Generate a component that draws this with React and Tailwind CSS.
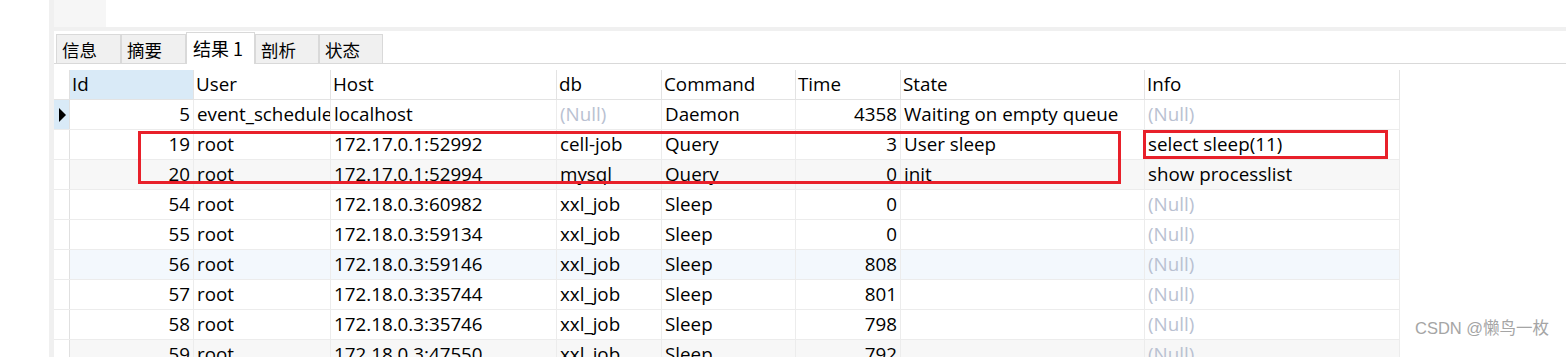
const cols = [
  { key: "id", label: "Id", w: "w-[124px]", right: true },
  { key: "user", label: "User", w: "w-[137px]" },
  { key: "host", label: "Host", w: "w-[226px]" },
  { key: "db", label: "db", w: "w-[105px]" },
  { key: "command", label: "Command", w: "w-[134px]" },
  { key: "time", label: "Time", w: "w-[105px]", right: true },
  { key: "state", label: "State", w: "w-[244px]" },
  { key: "info", label: "Info", w: "w-[255px]" },
]

const rows = [
  { id: 5, user: "event_scheduler", host: "localhost", db: null, command: "Daemon", time: 4358, state: "Waiting on empty queue", info: null, bg: "bg-white", current: true },
  { id: 19, user: "root", host: "172.17.0.1:52992", db: "cell-job", command: "Query", time: 3, state: "User sleep", info: "select sleep(11)", bg: "bg-white" },
  { id: 20, user: "root", host: "172.17.0.1:52994", db: "mysql", command: "Query", time: 0, state: "init", info: "show processlist", bg: "bg-[#f7f7f7]" },
  { id: 54, user: "root", host: "172.18.0.3:60982", db: "xxl_job", command: "Sleep", time: 0, state: "", info: null, bg: "bg-white" },
  { id: 55, user: "root", host: "172.18.0.3:59134", db: "xxl_job", command: "Sleep", time: 0, state: "", info: null, bg: "bg-white" },
  { id: 56, user: "root", host: "172.18.0.3:59146", db: "xxl_job", command: "Sleep", time: 808, state: "", info: null, bg: "bg-[#f3f8fd]" },
  { id: 57, user: "root", host: "172.18.0.3:35744", db: "xxl_job", command: "Sleep", time: 801, state: "", info: null, bg: "bg-white" },
  { id: 58, user: "root", host: "172.18.0.3:35746", db: "xxl_job", command: "Sleep", time: 798, state: "", info: null, bg: "bg-white" },
  { id: 59, user: "root", host: "172.18.0.3:47550", db: "xxl_job", command: "Sleep", time: 792, state: "", info: null, bg: "bg-[#f7f7f7]" },
]

const tabs = ["信息", "摘要", "结果 1", "剖析", "状态"]

function Cell({ col, value }) {
  const isNull = value === null
  return (
    <div
      className={`${col.w} shrink-0 h-full border-r border-[#ececec] overflow-hidden whitespace-nowrap flex items-center px-[3px] ${
        col.right ? "justify-end" : ""
      } ${isNull ? "text-[#b9c1d1]" : "text-black"}`}
    >
      {isNull ? "(Null)" : value}
    </div>
  )
}

export default function App() {
  return (
    <div className="relative w-[1566px] h-[357px] overflow-hidden bg-white flex font-['Open_Sans','Noto_Sans_CJK_SC',sans-serif] text-[18.8px]">
      <div className="w-[49px] shrink-0 bg-white" />
      <div className="w-[5px] shrink-0 bg-[#f0f0f0]" />
      <div className="flex-1 flex flex-col">
        {/* toolbar */}
        <div className="h-[27px] shrink-0 flex">
          <div className="w-[52px] bg-[#f6f6f6]" />
        </div>
        <div className="h-[4px] shrink-0 bg-[#f0f0f0]" />

        {/* tabs */}
        <div className="h-[33px] shrink-0 flex items-end pl-[2px] border-b border-[#d9d9d9] font-['Noto_Sans_CJK_SC',sans-serif]">
          {tabs.map((t, i) =>
            i === 2 ? (
              <div
                key={t}
                className="w-[69px] h-[32px] -mb-px bg-white border border-b-0 border-[#d9d9d9] flex items-center pl-[6px] text-[18px] text-black"
              >
                {t}
              </div>
            ) : (
              <div
                key={t}
                className={`${i === 3 || i === 4 ? "w-[64px]" : "w-[65px]"} h-[29px] bg-[#f0f0f0] border border-b-0 border-[#d9d9d9] flex items-center pl-[5px] pt-[2px] text-[17.5px] text-black`}
              >
                {t}
              </div>
            )
          )}
        </div>

        {/* grid */}
        <div className="pt-[6px] shrink-0">
          <div className="w-[1346px]">
            <div className="flex h-[30px] border-b border-[#e3e3e3]">
              <div className="w-[16px] shrink-0 border-r border-[#e0e0e0] bg-white" />
              {cols.map((c, i) => (
                <div
                  key={c.key}
                  className={`${c.w} shrink-0 flex items-center px-[2px] border-r border-[#e3e3e3] text-black ${
                    i === 0 ? "bg-[#d9eaf7]" : "bg-white"
                  }`}
                >
                  {c.label}
                </div>
              ))}
            </div>
            {rows.map((r) => (
              <div key={r.id} className="flex h-[30px] border-b border-[#ececec]">
                <div
                  className={`w-[16px] shrink-0 border-r border-[#e0e0e0] flex items-center justify-center ${
                    r.current ? "bg-[#d9eaf7]" : "bg-white"
                  }`}
                >
                  {r.current && (
                    <svg width="8" height="14" viewBox="0 0 8 14">
                      <path d="M1 0 L8 7 L1 14 Z" fill="#000" />
                    </svg>
                  )}
                </div>
                <div className={`flex h-full ${r.bg}`}>
                  {cols.map((c) => (
                    <Cell key={c.key} col={c} value={r[c.key]} />
                  ))}
                </div>
              </div>
            ))}
          </div>
        </div>
      </div>

      {/* annotation boxes */}
      <div className="absolute left-[138px] top-[131px] w-[983px] h-[53px] border-[3px] border-[#e8202a]" />
      <div className="absolute left-[1143px] top-[130px] w-[245px] h-[29px] border-[3px] border-[#e8202a]" />

      {/* watermark */}
      <div className="absolute left-[1415px] top-[316px] text-[16.5px] text-[#a5a5a5] font-['Liberation_Sans','Noto_Sans_CJK_SC',sans-serif]">
        CSDN @懒鸟一枚
      </div>
    </div>
  )
}
